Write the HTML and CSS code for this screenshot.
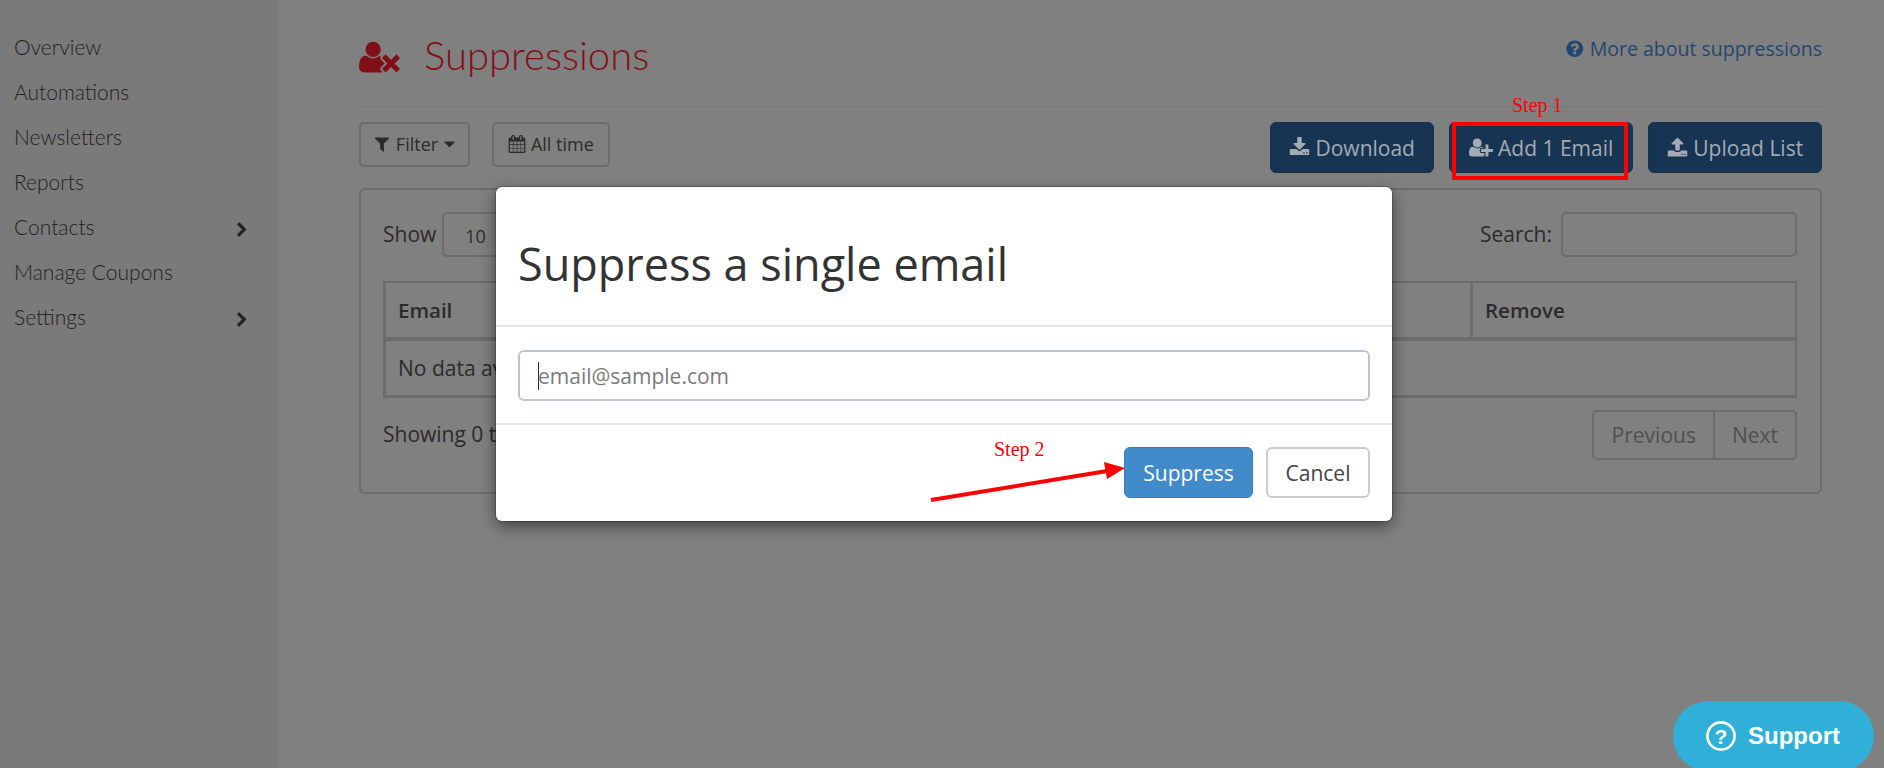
FILE: index.html
```html
<!DOCTYPE html>
<html lang="en">
<head>
    <meta charset="UTF-8">
    <title>Suppressions</title>
    <link rel="stylesheet" href="styles.css">
</head>
<body>
    <aside class="sidebar">
        <a class="nav-item">Overview</a>
        <a class="nav-item">Automations</a>
        <a class="nav-item">Newsletters</a>
        <a class="nav-item">Reports</a>
        <a class="nav-item">Contacts <svg class="chevron" viewBox="0 0 1792 1792"><path d="M1363 877l-742 742q-19 19-45 19t-45-19l-166-166q-19-19-19-45t19-45l531-531-531-531q-19-19-19-45t19-45l166-166q19-19 45-19t45 19l742 742q19 19 19 45t-19 45z"/></svg></a>
        <a class="nav-item">Manage Coupons</a>
        <a class="nav-item">Settings <svg class="chevron" viewBox="0 0 1792 1792"><path d="M1363 877l-742 742q-19 19-45 19t-45-19l-166-166q-19-19-19-45t19-45l531-531-531-531q-19-19-19-45t19-45l166-166q19-19 45-19t45 19l742 742q19 19 19 45t-19 45z"/></svg></a>
    </aside>

    <main class="content">
        <header class="page-head">
            <h1 class="page-title">
                <svg class="title-icon" viewBox="0 0 2048 1792"><path d="M704 896q-159 0-271.500-112.500t-112.500-271.500 112.500-271.500 271.500-112.500 271.500 112.500 112.500 271.500-112.500 271.500-271.500 112.500zm1077 320l249 249q9 9 9 23 0 13-9 22l-136 136q-9 9-22 9-14 0-23-9l-249-249-249 249q-9 9-23 9-13 0-22-9l-136-136q-9-9-9-22 0-14 9-23l249-249-249-249q-9-9-9-23 0-13 9-22l136-136q9-9 22-9 14 0 23 9l249 249 249-249q9-9 23-9 13 0 22 9l136 136q9 9 9 22 0 14-9 23zm-498 0l-181 181q-37 37-37 91 0 53 37 90l83 83q-21 3-44 3h-874q-121 0-194-69t-73-190q0-53 3.500-103.500t14-109 26.500-108.500 43-97.500 62-81 85.500-53.500 111.500-20q19 0 39 17 154 122 319 122t319-122q20-17 39-17 28 0 57 6-28 27-41 50t-13 56q0 54 37 91z"/></svg>
                <span class="title-text">Suppressions</span>
            </h1>
            <a class="help-link"><svg class="icon" viewBox="0 0 1792 1792"><path d="M1024 1376v-192q0-14-9-23t-23-9h-192q-14 0-23 9t-9 23v192q0 14 9 23t23 9h192q14 0 23-9t9-23zm256-672q0-88-55.500-163t-138.500-116-170-41q-243 0-371 213-15 24 8 42l132 100q7 6 19 6 16 0 25-12 53-68 86-92 34-24 86-24 48 0 85.500 26t37.500 59q0 38-20 61t-68 45q-63 28-115.500 86.500t-52.500 125.500v36q0 14 9 23t23 9h192q14 0 23-9t9-23q0-19 21.500-49.500t54.500-49.500q32-18 49-28.500t46-35 44.500-48 28-60.500 12.500-81zm384 192q0 209-103 385.500t-279.500 279.500-385.500 103-385.500-103-279.500-279.500-103-385.500 103-385.500 279.500-279.500 385.500-103 385.500 103 279.500 279.500 103 385.500z"/></svg> More about suppressions</a>
        </header>

        <div class="toolbar">
            <div class="toolbar-left">
                <button class="btn-light btn-filter"><svg class="icon" viewBox="0 0 1792 1792"><path d="M1595 295q17 41-14 70l-493 493v742q0 42-39 59-13 5-25 5-27 0-45-19l-256-256q-19-19-19-45v-486l-493-493q-31-29-14-70 17-39 59-39h1280q42 0 59 39z"/></svg> Filter <svg class="icon caret" viewBox="0 0 1792 1792"><path d="M1408 704q0 26-19 45l-448 448q-19 19-45 19t-45-19l-448-448q-19-19-19-45t19-45 45-19h896q26 0 45 19t19 45z"/></svg></button>
                <button class="btn-light btn-time"><svg class="icon" viewBox="0 0 1664 1792"><path d="M128 1664h288v-288h-288v288zm352 0h320v-288h-320v288zm-352-352h288v-320h-288v320zm352 0h320v-320h-320v320zm-352-384h288v-288h-288v288zm736 736h320v-288h-320v288zm-384-736h320v-288h-320v288zm768 736h288v-288h-288v288zm-384-352h320v-320h-320v320zm-352-864v-288q0-13-9.500-22.500t-22.500-9.500h-64q-13 0-22.500 9.500t-9.500 22.500v288q0 13 9.500 22.500t22.500 9.500h64q13 0 22.500-9.500t9.500-22.500zm736 864h288v-320h-288v320zm-384-384h320v-288h-320v288zm384 0h288v-288h-288v288zm32-480v-288q0-13-9.500-22.500t-22.500-9.500h-64q-13 0-22.500 9.500t-9.500 22.500v288q0 13 9.500 22.500t22.500 9.500h64q13 0 22.500-9.500t9.500-22.500zm384-64v1280q0 52-38 90t-90 38h-1408q-52 0-90-38t-38-90v-1280q0-52 38-90t90-38h128v-96q0-66 47-113t113-47h64q66 0 113 47t47 113v96h384v-96q0-66 47-113t113-47h64q66 0 113 47t47 113v96h128q52 0 90 38t38 90z"/></svg> All time</button>
            </div>
            <div class="toolbar-right">
                <button class="btn-dark btn-download"><svg class="icon" viewBox="0 0 1792 1792"><path d="M1344 1344q0-26-19-45t-45-19-45 19-19 45 19 45 45 19 45-19 19-45zm256 0q0-26-19-45t-45-19-45 19-19 45 19 45 45 19 45-19 19-45zm128-224v320q0 40-28 68t-68 28h-1472q-40 0-68-28t-28-68v-320q0-40 28-68t68-28h465l135 136q58 56 136 56t136-56l136-136h464q40 0 68 28t28 68zm-325-569q17 41-14 70l-448 448q-18 19-45 19t-45-19l-448-448q-31-29-14-70 17-39 59-39h256v-448q0-26 19-45t45-19h256q26 0 45 19t19 45v448h256q42 0 59 39z"/></svg> Download</button>
                <button class="btn-dark btn-add"><svg class="icon icon-wide" viewBox="0 0 2048 1792"><path d="M704 896q-159 0-271.500-112.500t-112.500-271.500 112.500-271.500 271.500-112.500 271.500 112.500 112.500 271.500-112.500 271.500-271.500 112.500zm960 128h352q13 0 22.500 9.500t9.500 22.500v192q0 13-9.500 22.500t-22.500 9.500h-352v352q0 13-9.500 22.500t-22.500 9.500h-192q-13 0-22.500-9.500t-9.500-22.500v-352h-352q-13 0-22.500-9.500t-9.500-22.500v-192q0-13 9.500-22.500t22.500-9.500h352v-352q0-13 9.500-22.500t22.500-9.500h192q13 0 22.500 9.500t9.500 22.500v352zm-736 224q0 52 38 90t90 38h256v238q-68 50-171 50h-874q-121 0-194-69t-73-190q0-53 3.500-103.500t14-109 26.500-108.500 43-97.500 62-81 85.500-53.500 111.500-20q19 0 39 17 79 61 154.500 91.500t164.500 30.500 164.500-30.500 154.500-91.500q20-17 39-17 132 0 217 96h-223q-52 0-90 38t-38 90v192z"/></svg> Add 1 Email</button>
                <button class="btn-dark btn-upload"><svg class="icon" viewBox="0 0 1792 1792"><path d="M1344 1472q0-26-19-45t-45-19-45 19-19 45 19 45 45 19 45-19 19-45zm256 0q0-26-19-45t-45-19-45 19-19 45 19 45 45 19 45-19 19-45zm128-224v320q0 40-28 68t-68 28h-1472q-40 0-68-28t-28-68v-320q0-40 28-68t68-28h427q21 56 70.500 92t110.500 36h256q61 0 110.500-36t70.500-92h427q40 0 68 28t28 68zm-325-648q-17 40-59 40h-256v448q0 26-19 45t-45 19h-256q-26 0-45-19t-19-45v-448h-256q-42 0-59-40-17-39 14-69l448-448q18-19 45-19t45 19l448 448q31 30 14 69z"/></svg> Upload List</button>
            </div>
        </div>

        <section class="panel">
            <div class="panel-top">
                <label class="show-label">Show <span class="select-box">10</span></label>
                <label class="search-label">Search: <span class="search-box"></span></label>
            </div>
            <table class="data-table">
                <thead>
                    <tr><th>Email</th><th class="col-remove">Remove</th></tr>
                </thead>
                <tbody>
                    <tr><td colspan="2">No data available in table</td></tr>
                </tbody>
            </table>
            <div class="panel-bottom">
                <span class="entries">Showing 0 to 0 of 0 entries</span>
                <div class="pager"><span class="page-btn">Previous</span><span class="page-btn">Next</span></div>
            </div>
        </section>
    </main>

    <!-- modal and the red notes lie over the page -->
    <div class="modal">
        <h2 class="modal-head">Suppress a single email</h2>
        <div class="modal-body">
            <div class="email-input"><span class="cursor"></span>email@sample.com</div>
        </div>
        <div class="modal-foot">
            <button class="btn-suppress">Suppress</button>
            <button class="btn-cancel">Cancel</button>
        </div>
    </div>

    <span class="step step-1">Step 1</span>
    <div class="step-box"></div>
    <span class="step step-2">Step 2</span>
    <svg class="arrow" viewBox="0 0 210 50" width="210" height="50"><path d="M6 38L182 9" stroke="#f00" stroke-width="4"/><path d="M200 6L179 0L182 17z" fill="#f00"/></svg>

    <div class="support">
        <svg class="support-icon" viewBox="0 0 30 30"><circle cx="15" cy="15" r="13.6" fill="none" stroke="#fff" stroke-width="2.6"/><text x="15" y="22.500" text-anchor="middle" class="support-q">?</text></svg>
        Support
    </div>
</body>
</html>
```

FILE: styles.css
```css
html, body {
    height: 100%;
    margin: 0;
    overflow: hidden;
}

body {
    display: flex;
    background: #808080;
    font-family: "Open Sans", sans-serif;
    font-size: 21px;
    color: #2b2b2b;
}

button {
    font-family: inherit;
}

.icon {
    width: 1em;
    height: 1em;
    fill: currentColor;
    vertical-align: -0.12em;
}

.icon-wide {
    width: 1.14em;
}

/* sidebar */
.sidebar {
    width: 277px;
    flex: none;
    box-sizing: border-box;
    padding-top: 24px;
    background: #7a7a7a;
}

.nav-item {
    display: flex;
    justify-content: space-between;
    align-items: center;
    height: 45px;
    padding: 0 27px 0 14px;
    font-family: Lato, sans-serif;
    font-weight: 300;
    font-size: 21px;
    color: #222;
}

.chevron {
    width: 16px;
    height: 16px;
    fill: #222;
    margin-top: 7px;
}

/* main column */
.content {
    flex: 1;
    padding: 0 62px 0 82px;
}

.page-head {
    display: flex;
    justify-content: space-between;
    height: 106px;
    border-bottom: 1px solid #787878;
}

.page-title {
    display: flex;
    align-items: center;
    gap: 24px;
    height: 114px;
    margin: 0;
    font-family: Lato, sans-serif;
    font-weight: 300;
    font-size: 40px;
    color: #7f1015;
}

.title-text {
    margin-bottom: 4px;
}

.title-icon {
    width: 41px;
    height: 36px;
    fill: #7f1015;
}

.help-link {
    margin-top: 35px;
    font-size: 19.500px;
    color: #23476e;
}

.toolbar {
    display: flex;
    justify-content: space-between;
    margin-top: 15px;
}

.toolbar-left {
    display: flex;
    gap: 22px;
}

.toolbar-right {
    display: flex;
    gap: 15px;
}

.btn-light {
    height: 45px;
    padding: 0 0 2px;
    background: none;
    border: 2px solid #6c6c6c;
    border-radius: 5px;
    font-size: 18px;
    color: #2b2b2b;
}

.btn-filter {
    width: 111px;
}

.btn-time {
    width: 118px;
}

.caret {
    width: 19px;
    margin-left: -3px;
    margin-right: -3px;
}

.btn-dark {
    height: 51px;
    padding: 0;
    background: #173553;
    border: 1px solid #15304c;
    border-radius: 6px;
    font-size: 21px;
    color: #a3abb3;
}

.btn-download {
    width: 164px;
}

.btn-add {
    width: 184px;
}

.btn-upload {
    width: 174px;
}

.panel {
    box-sizing: border-box;
    height: 306px;
    margin-top: 15px;
    padding: 22px 23px 0 22px;
    border: 2px solid #6c6c6c;
    border-radius: 6px;
}

.panel-top {
    display: flex;
    justify-content: space-between;
    height: 48px;
}

.show-label, .search-label {
    display: flex;
    align-items: center;
    gap: 6px;
    height: 45px;
    line-height: 41px;
}

.search-label {
    gap: 9px;
}

.select-box {
    box-sizing: border-box;
    width: 100px;
    height: 45px;
    padding: 0 21px;
    line-height: 45px;
    border: 2px solid #6c6c6c;
    border-radius: 5px;
    font-size: 18px;
}

.search-box {
    box-sizing: border-box;
    width: 236px;
    height: 45px;
    border: 2px solid #6c6c6c;
    border-radius: 5px;
}

.data-table {
    width: 100%;
    margin-top: 21px;
    border-collapse: collapse;
}

.data-table th, .data-table td {
    padding: 0 12px;
    border: 3px solid #6c6c6c;
    text-align: left;
}

.data-table th {
    height: 54px;
    border-top-width: 2px;
    border-bottom-width: 4px;
    font-size: 20.500px;
    font-weight: 600;
}

.data-table td {
    height: 54px;
    border-right-width: 2px;
}

.col-remove {
    width: 298px;
    border-right-width: 2px !important;
}

.panel-bottom {
    display: flex;
    justify-content: space-between;
    align-items: center;
    height: 50px;
    margin-top: 12px;
}

.entries {
    margin-bottom: 2px;
}

.pager {
    display: flex;
}

.page-btn {
    box-sizing: border-box;
    height: 50px;
    line-height: 46px;
    padding: 0 17px;
    border: 2px solid #6c6c6c;
    color: #505050;
}

.page-btn:first-child {
    padding-left: 18px;
    border-radius: 5px 0 0 5px;
}

.page-btn:last-child {
    margin-left: -2px;
    border-radius: 0 5px 5px 0;
}

/* modal */
.modal {
    position: absolute;
    left: 496px;
    top: 187px;
    box-sizing: border-box;
    width: 896px;
    height: 334px;
    background: #fff;
    border-radius: 6px;
    box-shadow: 0 0 0 1px rgba(0, 0, 0, 0.2), 0 5px 15px rgba(0, 0, 0, 0.5);
}

.modal-head {
    box-sizing: border-box;
    height: 140px;
    margin: 0;
    padding: 46px 22px 0;
    border-bottom: 2px solid #e5e5e5;
    font-weight: 400;
    font-size: 45px;
    color: #333;
}

.modal-body {
    box-sizing: border-box;
    height: 98px;
    padding: 23px 22px 0;
    border-bottom: 2px solid #e5e5e5;
}

.email-input {
    display: flex;
    align-items: center;
    box-sizing: border-box;
    height: 51px;
    padding-left: 18px;
    border: 2px solid #bcc6d2;
    border-radius: 6px;
    font-size: 21px;
    color: #7b7b7b;
}

.cursor {
    width: 1px;
    height: 28px;
    margin-right: -1px;
    background: #333;
}

.modal-foot {
    display: flex;
    justify-content: flex-end;
    gap: 13px;
    padding: 22px 22px 0;
}

.btn-suppress, .btn-cancel {
    height: 51px;
    padding: 0;
    border-radius: 6px;
    font-size: 21px;
}

.btn-suppress {
    width: 129px;
    background: #428bca;
    border: 1px solid #357ebd;
    color: #fff;
}

.btn-cancel {
    width: 104px;
    background: #fff;
    border: 2px solid #ccc;
    color: #444;
}

/* red notes */
.step {
    position: absolute;
    font-family: "Liberation Serif", serif;
    font-size: 20px;
    line-height: 20px;
    color: #f00;
}

.step-1 {
    left: 1512px;
    top: 95px;
}

.step-2 {
    left: 994px;
    top: 439px;
}

.step-box {
    position: absolute;
    left: 1452px;
    top: 122px;
    box-sizing: border-box;
    width: 176px;
    height: 58px;
    border: 4px solid #f00;
}

.arrow {
    position: absolute;
    left: 925px;
    top: 462px;
}

/* support widget */
.support {
    position: absolute;
    left: 1673px;
    top: 701px;
    display: flex;
    align-items: center;
    gap: 12px;
    box-sizing: border-box;
    width: 201px;
    height: 70px;
    padding-left: 33px;
    background: #30b0d8;
    border-radius: 35px;
    font-family: "Liberation Sans", sans-serif;
    font-weight: 700;
    font-size: 24px;
    color: #fff;
}

.support-icon {
    width: 30px;
    height: 30px;
}

.support-q {
    font-size: 21px;
    font-weight: 700;
    fill: #fff;
}
```
